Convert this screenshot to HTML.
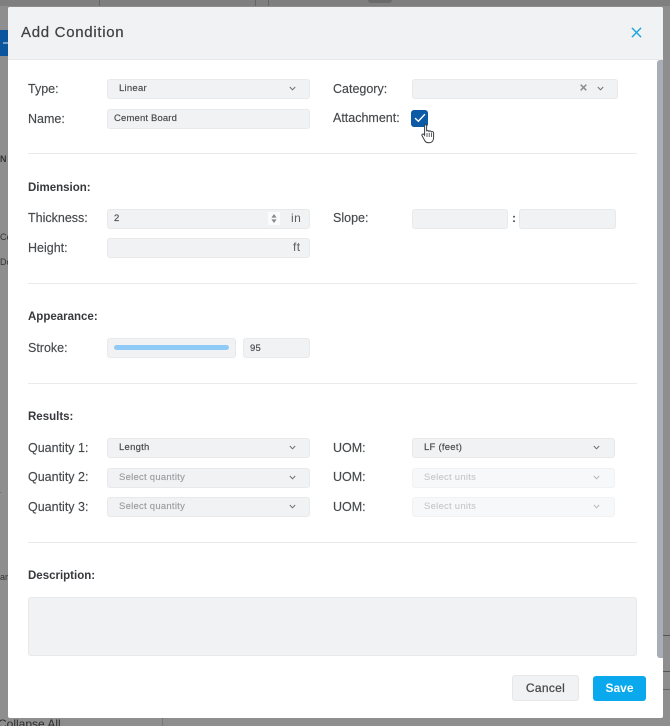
<!DOCTYPE html>
<html>
<head>
<meta charset="utf-8">
<style>
html,body{margin:0;padding:0;background:#8e8e8e;}
body{width:670px;height:726px;position:relative;overflow:hidden;font-family:"Liberation Sans",sans-serif;color:#3c4043;}
.a{position:absolute;}
.lab{position:absolute;left:28px;font-size:12.5px;line-height:16px;color:#46494c;letter-spacing:0;white-space:nowrap;-webkit-text-stroke:.15px #46494c;}
.h{position:absolute;left:28px;font-size:11.5px;line-height:16px;font-weight:bold;color:#37393c;letter-spacing:0;white-space:nowrap;}
.f{position:absolute;box-sizing:border-box;height:20px;background:#f1f2f4;border:1px solid #e8e9eb;border-radius:3px;}
.t{position:absolute;font-size:9.5px;line-height:12px;letter-spacing:.25px;color:#45484b;white-space:nowrap;-webkit-text-stroke:.15px #45484b;}
.ph{color:#9a9da1;-webkit-text-stroke:.15px #9a9da1;}
.ph2{color:#c5c8cb;-webkit-text-stroke:.1px #c5c8cb;}
.hr{position:absolute;left:28px;width:609px;height:1px;background:#e9eaec;}
svg{position:absolute;overflow:visible;}
</style>
</head>
<body>
<!-- backdrop detail -->
<div class="a" style="left:0;top:0;width:670px;height:6px;background:#7f7f7f;"></div>
<div class="a" style="left:99px;top:0;width:1px;height:6px;background:#666;"></div>
<div class="a" style="left:255px;top:0;width:1px;height:6px;background:#666;"></div>
<div class="a" style="left:268px;top:0;width:1px;height:6px;background:#666;"></div>
<div class="a" style="left:368px;top:0;width:24px;height:3px;background:#6b6b6b;border-radius:0 0 6px 6px;"></div>
<div class="a" style="left:0;top:30px;width:8px;height:26px;background:#0b559f;"></div>
<div class="a" style="left:3px;top:42px;width:5px;height:2px;background:#7d9cc4;"></div>
<div class="a" style="left:0;top:154px;font-size:9px;font-weight:bold;line-height:10px;color:#333;width:8px;overflow:hidden;">N</div>
<div class="a" style="left:0;top:232px;font-size:9px;line-height:10px;color:#333;width:8px;overflow:hidden;">Ce</div>
<div class="a" style="left:0;top:257px;font-size:9px;line-height:10px;color:#333;width:8px;overflow:hidden;">Do</div>
<div class="a" style="left:0;top:489px;font-size:9px;line-height:10px;color:#333;width:8px;overflow:hidden;text-indent:-4px;">y</div>
<div class="a" style="left:0;top:572px;font-size:9px;line-height:10px;color:#333;width:8px;overflow:hidden;">ar</div>
<div class="a" style="left:0;top:718px;width:670px;height:8px;overflow:hidden;"><div style="position:absolute;left:-2px;top:0;font-size:12px;line-height:12px;color:#2c2c2c;white-space:nowrap;">Collapse All</div></div>
<div class="a" style="left:162px;top:718px;width:1px;height:8px;background:#777;"></div>
<div class="a" style="left:663px;top:635px;width:7px;height:1px;background:#555;"></div>
<div class="a" style="left:663px;top:671px;width:7px;height:1px;background:#555;"></div>
<div class="a" style="left:663px;top:689px;width:7px;height:1px;background:#666;"></div>

<!-- modal -->
<div class="a" style="left:8px;top:7px;width:655px;height:711px;background:#fff;border-radius:2px;"></div>
<div class="a" style="left:8px;top:7px;width:655px;height:53px;background:#f1f2f4;border-bottom:1px solid #e8e9eb;box-sizing:border-box;border-radius:2px 2px 0 0;"></div>
<div class="a" style="left:657px;top:60px;width:6px;height:598px;background:#a8aeb6;border-radius:3px 0 0 3px;"></div>
<div class="a" style="left:21px;top:23px;font-size:15px;line-height:19px;letter-spacing:.7px;color:#3d4043;white-space:nowrap;-webkit-text-stroke:.2px #3d4043;">Add Condition</div>
<svg style="left:631px;top:27px;" width="11" height="11" viewBox="0 0 12 12"><path d="M1 1L11 11M11 1L1 11" stroke="#1ba4dc" stroke-width="1.5" fill="none"/></svg>

<!-- row 1 -->
<div class="lab" style="top:81px;">Type:</div>
<div class="f" style="left:107px;top:79px;width:203px;"></div>
<div class="t" style="left:119px;top:83px;">Linear</div>
<svg style="left:289px;top:86px;" width="7" height="5" viewBox="0 0 7 5"><path d="M.8 1L3.5 3.8L6.2 1" stroke="#6a6d70" stroke-width="1" fill="none"/></svg>
<div class="lab" style="left:333px;top:81px;">Category:</div>
<div class="f" style="left:412px;top:79px;width:206px;"></div>
<svg style="left:580px;top:84px;" width="7" height="7" viewBox="0 0 7 7"><path d="M.7 .7L6.3 6.3M6.3 .7L.7 6.3" stroke="#8b8e91" stroke-width="1.5" fill="none"/></svg>
<svg style="left:597px;top:86px;" width="7" height="5" viewBox="0 0 7 5"><path d="M.8 1L3.5 3.8L6.2 1" stroke="#6a6d70" stroke-width="1" fill="none"/></svg>

<!-- row 2 -->
<div class="lab" style="top:111px;">Name:</div>
<div class="f" style="left:107px;top:109px;width:203px;"></div>
<div class="t" style="left:114px;top:113px;letter-spacing:.15px;">Cement Board</div>
<div class="lab" style="left:333px;top:110px;">Attachment:</div>
<div class="a" style="left:411px;top:110px;width:17px;height:17px;background:#0c5aa6;border-radius:3px;"></div>
<svg style="left:414px;top:113px;" width="12" height="10" viewBox="0 0 11 9"><path d="M1 4.6L4 7.5L10 1" stroke="#fff" stroke-width="1.3" fill="none"/></svg>
<svg style="left:421px;top:124px;" width="16" height="20" viewBox="0 0 16 20"><path d="M3.6 1.6C3.6 .3 5.6 .3 5.6 1.6V7.2C6 6.4 7.6 6.3 8 7.4C8.6 6.6 10 6.8 10.3 7.9C11 7.3 12.6 7.6 12.6 9V13.6C12.6 16 11.4 18.8 7.8 18.8C5 18.8 4.2 17.6 3.2 15.6L1 11.6C.4 10.4 2 9.4 3 10.4L3.6 11.2Z" fill="#fff" stroke="#3a3d40" stroke-width="1"/><path d="M6 9V13M8.2 9V13M10.4 9V13" stroke="#3a3d40" stroke-width=".8"/></svg>

<div class="hr" style="top:153px;"></div>

<!-- dimension -->
<div class="h" style="top:180px;">Dimension:</div>
<div class="lab" style="top:210px;">Thickness:</div>
<div class="f" style="left:107px;top:209px;width:203px;"></div>
<div class="t" style="left:114px;top:213px;">2</div>
<div class="a" style="left:268px;top:212px;width:12px;height:13px;background:#fbfbfc;"></div>
<svg style="left:271px;top:214px;" width="6" height="9" viewBox="0 0 6 9"><path d="M3 0L5.6 3.6H.4ZM3 9L.4 5.4H5.6Z" fill="#85888c"/></svg>
<div class="a" style="left:291px;top:211px;font-size:12px;line-height:15px;color:#5b5e61;letter-spacing:.4px;">in</div>
<div class="lab" style="left:333px;top:210px;">Slope:</div>
<div class="f" style="left:412px;top:209px;width:96px;"></div>
<div class="a" style="left:512px;top:211px;font-size:12px;line-height:15px;font-weight:bold;color:#45484b;">:</div>
<div class="f" style="left:519px;top:209px;width:97px;"></div>
<div class="lab" style="top:240px;">Height:</div>
<div class="f" style="left:107px;top:238px;width:203px;"></div>
<div class="a" style="left:293px;top:240px;font-size:12px;line-height:15px;color:#5b5e61;letter-spacing:.4px;">ft</div>

<div class="hr" style="top:283px;"></div>

<!-- appearance -->
<div class="h" style="top:309px;">Appearance:</div>
<div class="lab" style="top:340px;">Stroke:</div>
<div class="f" style="left:107px;top:338px;width:129px;"></div>
<div class="a" style="left:114px;top:345px;width:115px;height:5px;background:#8fcbf6;border-radius:2.5px;"></div>
<div class="f" style="left:243px;top:338px;width:67px;"></div>
<div class="t" style="left:250px;top:343px;">95</div>

<div class="hr" style="top:383px;"></div>

<!-- results -->
<div class="h" style="top:409px;">Results:</div>
<div class="lab" style="top:440px;">Quantity 1:</div>
<div class="f" style="left:107px;top:438px;width:203px;"></div>
<div class="t" style="left:119px;top:442px;">Length</div>
<svg style="left:289px;top:445px;" width="7" height="5" viewBox="0 0 7 5"><path d="M.8 1L3.5 3.8L6.2 1" stroke="#6a6d70" stroke-width="1" fill="none"/></svg>
<div class="lab" style="top:469px;">Quantity 2:</div>
<div class="f" style="left:107px;top:468px;width:203px;"></div>
<div class="t ph" style="left:119px;top:472px;">Select quantity</div>
<svg style="left:289px;top:475px;" width="7" height="5" viewBox="0 0 7 5"><path d="M.8 1L3.5 3.8L6.2 1" stroke="#6a6d70" stroke-width="1" fill="none"/></svg>
<div class="lab" style="top:499px;">Quantity 3:</div>
<div class="f" style="left:107px;top:497px;width:203px;"></div>
<div class="t ph" style="left:119px;top:501px;">Select quantity</div>
<svg style="left:289px;top:504px;" width="7" height="5" viewBox="0 0 7 5"><path d="M.8 1L3.5 3.8L6.2 1" stroke="#6a6d70" stroke-width="1" fill="none"/></svg>

<div class="lab" style="left:333px;top:440px;">UOM:</div>
<div class="f" style="left:412px;top:438px;width:203px;"></div>
<div class="t" style="left:424px;top:442px;">LF (feet)</div>
<svg style="left:593px;top:445px;" width="7" height="5" viewBox="0 0 7 5"><path d="M.8 1L3.5 3.8L6.2 1" stroke="#6a6d70" stroke-width="1" fill="none"/></svg>
<div class="lab" style="left:333px;top:469px;">UOM:</div>
<div class="f" style="left:412px;top:468px;width:203px;background:#f7f8f9;border-color:#f1f2f3;"></div>
<div class="t ph2" style="left:424px;top:472px;">Select units</div>
<svg style="left:593px;top:475px;" width="7" height="5" viewBox="0 0 7 5"><path d="M.8 1L3.5 3.8L6.2 1" stroke="#b5b8bb" stroke-width="1" fill="none"/></svg>
<div class="lab" style="left:333px;top:499px;">UOM:</div>
<div class="f" style="left:412px;top:497px;width:203px;background:#f7f8f9;border-color:#f1f2f3;"></div>
<div class="t ph2" style="left:424px;top:501px;">Select units</div>
<svg style="left:593px;top:504px;" width="7" height="5" viewBox="0 0 7 5"><path d="M.8 1L3.5 3.8L6.2 1" stroke="#b5b8bb" stroke-width="1" fill="none"/></svg>

<div class="hr" style="top:542px;"></div>

<!-- description -->
<div class="h" style="top:568px;">Description:</div>
<div class="f" style="left:28px;top:597px;width:609px;height:59px;"></div>

<!-- buttons -->
<div class="a" style="left:512px;top:675px;width:67px;height:26px;box-sizing:border-box;background:#f1f2f4;border:1px solid #e6e7e9;border-radius:3px;text-align:center;font-size:12px;line-height:24px;letter-spacing:.3px;color:#45484b;-webkit-text-stroke:.25px #45484b;">Cancel</div>
<div class="a" style="left:593px;top:676px;width:53px;height:25px;background:#0aa8ec;border-radius:3px;text-align:center;font-size:12px;line-height:25px;font-weight:bold;letter-spacing:0;color:#fff;">Save</div>
</body>
</html>
